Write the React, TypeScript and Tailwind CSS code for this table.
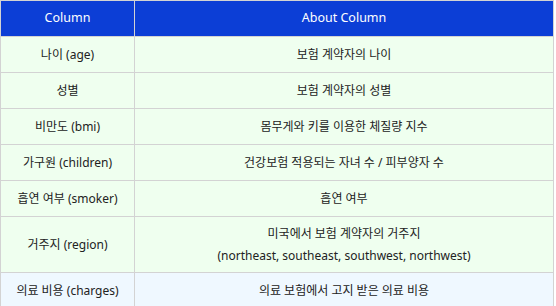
import React from 'react';

const rows: { col: string; about: React.ReactNode; tall?: boolean; blue?: boolean }[] = [
  { col: '나이 (age)', about: '보험 계약자의 나이' },
  { col: '성별', about: '보험 계약자의 성별' },
  { col: '비만도 (bmi)', about: '몸무게와 키를 이용한 체질량 지수' },
  { col: '가구원 (children)', about: '건강보험 적용되는 자녀 수 / 피부양자 수' },
  { col: '흡연 여부 (smoker)', about: '흡연 여부' },
  {
    col: '거주지 (region)',
    about: (
      <>
        미국에서 보험 계약자의 거주지
        <br />
        (northeast, southeast, southwest, northwest)
      </>
    ),
    tall: true,
  },
  { col: '의료 비용 (charges)', about: '의료 보험에서 고지 받은 의료 비용', blue: true },
];

export default function App() {
  return (
    <div className="w-[556px] h-[306px] overflow-hidden bg-white" style={{ fontFamily: '"Noto Sans", "Noto Sans CJK KR", sans-serif' }}>
      <table className="w-[554px] border-collapse text-[12px] text-[#222]">
        <thead>
          <tr className="h-[36px] bg-[#0c3ed6] text-white text-[12.5px]">
            <th className="w-[134px] border border-[#d3d3d3] font-normal">Column</th>
            <th className="border border-[#d3d3d3] font-normal">About Column</th>
          </tr>
        </thead>
        <tbody>
          {rows.map((r, i) => (
            <tr key={i} className={`${r.tall ? 'h-[56px]' : 'h-[36px]'} ${r.blue ? 'bg-[#eff8ff]' : 'bg-[#efffef]'}`}>
              <td className="border border-[#d3d3d3] text-center">{r.col}</td>
              <td className="border border-[#d3d3d3] text-center leading-[22px]">{r.about}</td>
            </tr>
          ))}
        </tbody>
      </table>
    </div>
  );
}
